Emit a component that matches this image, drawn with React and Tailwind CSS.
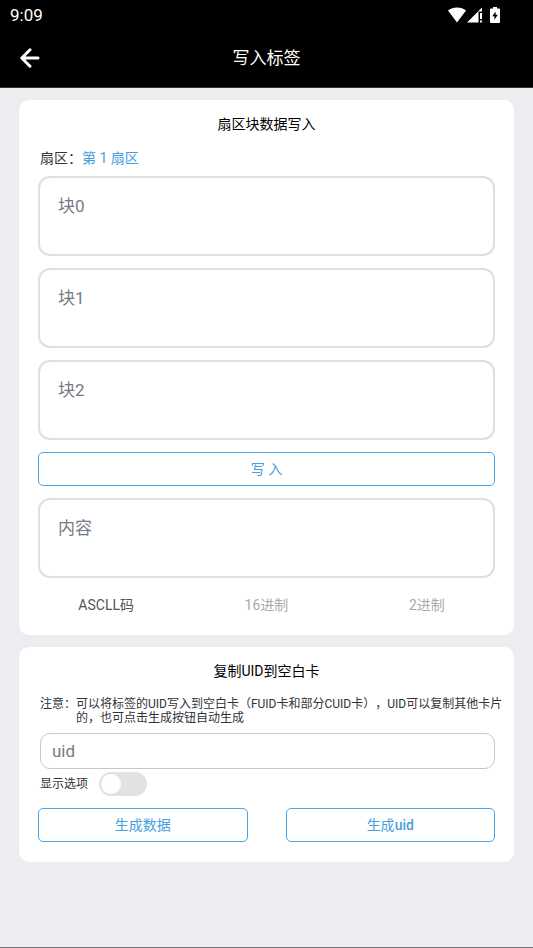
import React, { useState } from "react";

const blocks = ["块0", "块1", "块2"];
const formats = ["ASCLL码", "16进制", "2进制"];

const StatusIcons = () => (
  <div className="flex items-center">
    <svg width="18" height="16" viewBox="0 0 18 16" fill="#fff" aria-hidden="true">
      <path d="M0 3.600C2.400 1.600 5.500.6 9 .6s6.600 1 9 3L9 15.400z" />
    </svg>
    <svg className="ml-px" width="16" height="16" viewBox="0 0 16 16" fill="#fff" aria-hidden="true">
      <path d="M0 15.500L15 .5v4h-3.500v11z" />
      <path d="M13 6h2v6h-2zM13 13.500h2v2h-2z" />
    </svg>
    <svg className="ml-[7px]" width="10" height="16" viewBox="0 0 10 16" aria-hidden="true">
      <path d="M3 0h4v1.500h2q1 0 1 1V15q0 1-1 1H1q-1 0-1-1V2.500q0-1 1-1h2z" fill="#fff" />
      <path d="M5.600 4.500v3.300H7.800l-3.400 5V9.300H2.200z" fill="#000" />
    </svg>
  </div>
);

const BlockField = ({ label, value, onChange }) => (
  <textarea
    aria-label={label}
    placeholder={label}
    value={value}
    onChange={onChange}
    className="block w-full h-20 resize-none rounded-xl border-2 border-[#dfdfdf] bg-white px-[18px] py-4 text-[17px] leading-6 text-[#333] placeholder:text-[#757b85] outline-none"
  />
);

const OutlineButton = ({ children, className = "" }) => (
  <button
    type="button"
    className={`h-[34px] rounded-[5px] border border-[#45a5e6] bg-white text-sm text-[#45a0e0] ${className}`}
  >
    {children}
  </button>
);

export default function App() {
  const [values, setValues] = useState(["", "", ""]);
  const [content, setContent] = useState("");
  const [format, setFormat] = useState(0);
  const [uid, setUid] = useState("");
  const [showOptions, setShowOptions] = useState(false);

  const handleBlockChange = (index, value) => {
    setValues(values.map((v, i) => (i === index ? value : v)));
  };

  return (
    <div className="min-h-screen flex flex-col bg-[#ecedf1] border-b border-[#777] font-[Roboto,'Noto_Sans_CJK_SC',sans-serif] text-[#2f333b]">
      {/* === Header === */}
      <header className="bg-black text-white border-b border-[#333]">
        <div className="flex items-center justify-between h-[29px] pl-[10px] pr-[33px]">
          <span className="text-[17px] leading-7">9:09</span>
          <StatusIcons />
        </div>
        <div className="grid grid-cols-[60px_1fr_60px] items-center h-[58px]">
          <button type="button" aria-label="返回" className="pl-5">
            <svg
              width="20"
              height="20"
              viewBox="0 0 20 20"
              fill="none"
              stroke="#fff"
              strokeWidth="3"
              strokeLinecap="round"
              strokeLinejoin="round"
            >
              <path d="M10 1.800L1.800 10l8.200 8.200M2.500 10h15.500" />
            </svg>
          </button>
          <h1 className="text-center text-[17px] leading-6">写入标签</h1>
        </div>
      </header>

      <main className="flex flex-col gap-3 px-[19px] py-3">
        {/* === Sector write === */}
        <section className="rounded-[10px] bg-white px-[19px] pt-[14px] pb-5">
          <h2 className="text-center text-sm text-black">扇区块数据写入</h2>
          <div className="mt-[14px] mb-2 flex px-[2px] text-sm">
            <span>扇区：</span>
            <button type="button" className="text-[#45a0e0]">
              第 1 扇区
            </button>
          </div>
          <div className="flex flex-col gap-3">
            {blocks.map((label, index) => (
              <BlockField
                key={label}
                label={label}
                value={values[index]}
                onChange={(e) => handleBlockChange(index, e.target.value)}
              />
            ))}
            <OutlineButton className="w-full">写 入</OutlineButton>
            <BlockField
              label="内容"
              value={content}
              onChange={(e) => setContent(e.target.value)}
            />
          </div>
          <div className="-mx-3 mt-[17px] grid grid-cols-3 text-sm">
            {formats.map((name, index) => (
              <button
                key={name}
                type="button"
                onClick={() => setFormat(index)}
                className={format === index ? "text-[#555]" : "text-[#aaa]"}
              >
                {name}
              </button>
            ))}
          </div>
        </section>

        {/* === UID copy === */}
        <section className="rounded-[10px] bg-white px-[19px] pt-[14px] pb-5">
          <h2 className="text-center text-sm text-black">复制UID到空白卡</h2>
          <div className="-mr-2 mt-4 flex pl-[2px] text-xs leading-[14px] [text-spacing-trim:space-all]">
            <span className="shrink-0">注意：</span>
            <p>
              可以将标签的UID写入到空白卡（FUID卡和部分CUID卡），UID可以复制其他卡片的，也可点击生成按钮自动生成
            </p>
          </div>
          <div className="mt-2 pl-[2px]">
            <input
              type="text"
              aria-label="uid"
              placeholder="uid"
              value={uid}
              onChange={(e) => setUid(e.target.value)}
              className="block w-full h-9 rounded-[10px] border border-[#c8c8c8] bg-white px-[11px] text-[17px] text-[#333] placeholder:text-[#757b85] outline-none"
            />
          </div>
          <label className="mt-[3px] flex w-fit items-center gap-[11px] pl-[2px] text-xs">
            显示选项
            <input
              type="checkbox"
              role="switch"
              checked={showOptions}
              onChange={(e) => setShowOptions(e.target.checked)}
              className="peer sr-only"
            />
            <span className="flex h-6 w-12 items-center rounded-full bg-[#e2e2e2] px-[2px] peer-checked:justify-end peer-checked:bg-[#45a5e6]">
              <span className="h-5 w-5 rounded-full bg-white" />
            </span>
          </label>
          <div className="mt-3 grid grid-cols-2 gap-[38px]">
            <OutlineButton>生成数据</OutlineButton>
            <OutlineButton>
              生成<span className="font-medium">uid</span>
            </OutlineButton>
          </div>
        </section>
      </main>
    </div>
  );
}
